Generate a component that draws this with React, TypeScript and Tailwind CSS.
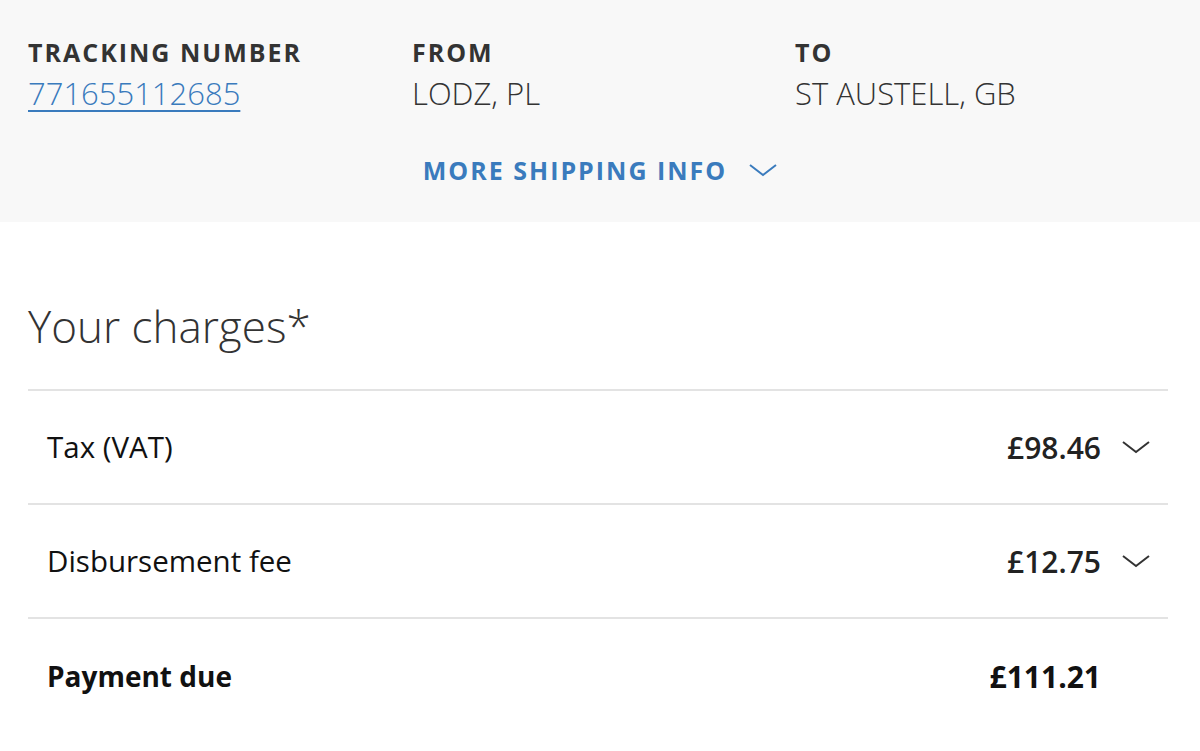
import React from 'react';

const Chevron: React.FC<{ className?: string }> = ({ className }) => (
  <svg viewBox="0 0 28 14" fill="none" stroke="currentColor" strokeWidth={2} className={className}>
    <polyline points="1,2 14,12 27,2" />
  </svg>
);

const ChargeRow: React.FC<{ label: string; amount: string; bold?: boolean; chevron?: boolean; border?: boolean }> = ({
  label, amount, bold, chevron, border,
}) => (
  <div className={`flex items-center h-[114px] pl-[19px] pr-[18px] ${border ? 'border-b-2 border-[#e3e3e3]' : ''}`}>
    <span className={`text-[#111] ${bold ? 'text-[28px] font-bold' : 'text-[29.5px] font-normal'}`}>{label}</span>
    <span className={`ml-auto text-[30px] ${bold ? 'font-bold text-[#111]' : 'font-semibold text-[#222]'}`}>{amount}</span>
    <span className="w-[49px] flex justify-end">
      {chevron && <Chevron className="w-[28px] h-[14px] text-[#333]" />}
    </span>
  </div>
);

export default function App() {
  return (
    <div className="w-[1200px] h-[751px] bg-white overflow-hidden" style={{ fontFamily: '"Open Sans", "Liberation Sans", sans-serif' }}>
      <section className="bg-[#f8f8f8] h-[222px] px-[28px] pt-[34px]">
        <div className="grid grid-cols-[384px_383px_1fr]">
          <div>
            <div className="text-[25px] font-bold tracking-[0.08em] text-[#333] leading-[36px]">TRACKING NUMBER</div>
            <a href="#" className="text-[31px] font-light text-[#3a7bbd] underline underline-offset-[5px] decoration-2 leading-[46px]">771655112685</a>
          </div>
          <div>
            <div className="text-[25px] font-bold tracking-[0.08em] text-[#333] leading-[36px]">FROM</div>
            <div className="text-[31px] font-light text-[#333] leading-[46px]">LODZ, PL</div>
          </div>
          <div>
            <div className="text-[25px] font-bold tracking-[0.08em] text-[#333] leading-[36px]">TO</div>
            <div className="text-[31px] font-light text-[#333] leading-[46px]">ST AUSTELL, GB</div>
          </div>
        </div>
        <div className="flex justify-center items-center gap-[22px] mt-[36px]">
          <span className="text-[25px] font-bold tracking-[0.08em] text-[#3a7bbd] leading-[36px]">MORE SHIPPING INFO</span>
          <Chevron className="w-[28px] h-[14px] text-[#3a7bbd]" />
        </div>
      </section>
      <section className="pl-[28px] pr-[32px] pt-[76px]">
        <h1 className="text-[44px] font-light text-[#333] leading-[56px] pb-[35px] border-b-2 border-[#e3e3e3]">Your charges*</h1>
        <ChargeRow label="Tax (VAT)" amount="£98.46" chevron border />
        <ChargeRow label="Disbursement fee" amount="£12.75" chevron border />
        <ChargeRow label="Payment due" amount="£111.21" bold />
      </section>
    </div>
  );
}
